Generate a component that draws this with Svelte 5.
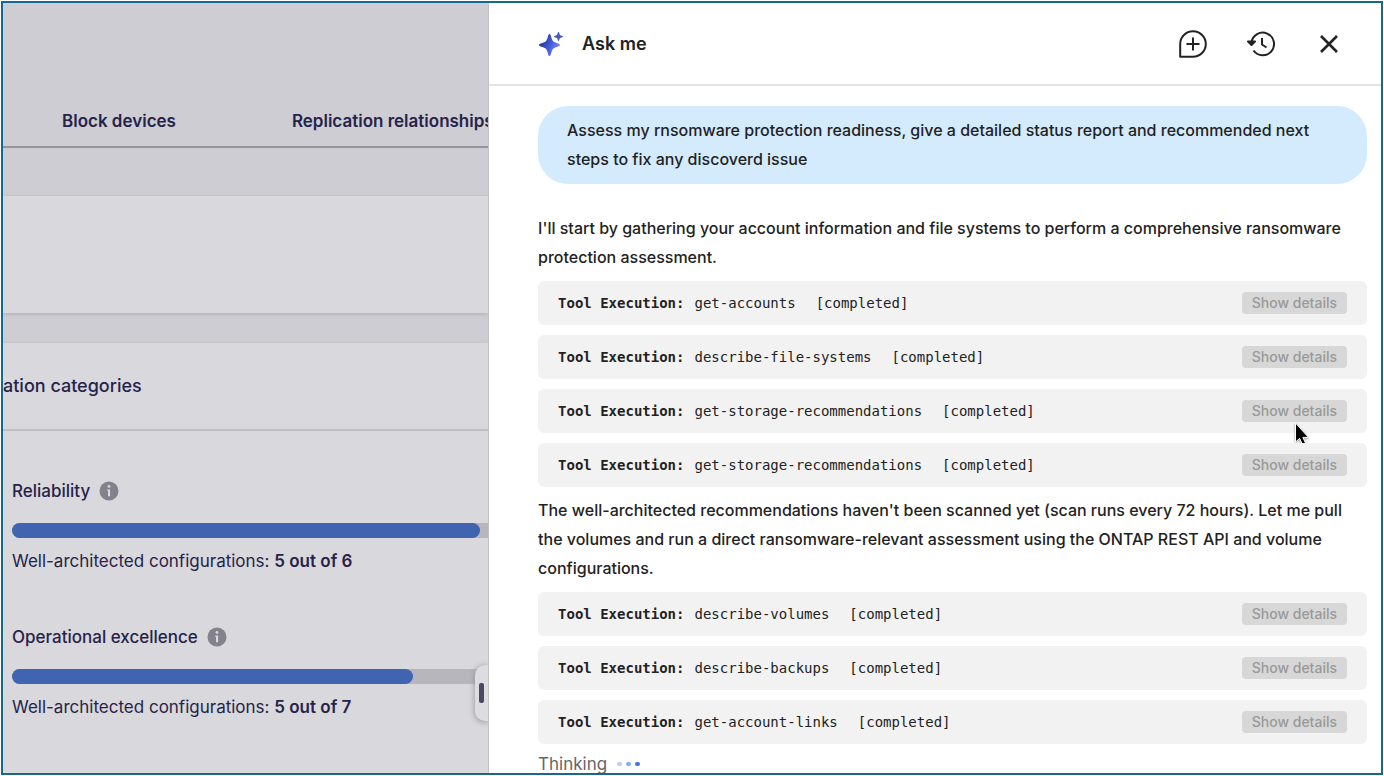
<script lang="ts">
  interface Category {
    name: string;
    done: number;
    total: number;
  }

  interface Block {
    text: string;
    tools: string[];
  }

  const tabs = ["Block devices", "Replication relationships"];

  const categories: Category[] = [
    { name: "Reliability", done: 5, total: 6 },
    { name: "Operational excellence", done: 5, total: 7 },
  ];

  const question =
    "Assess my rnsomware protection readiness, give a detailed status report and recommended next steps to fix any discoverd issue";

  const blocks: Block[] = [
    {
      text: "I'll start by gathering your account information and file systems to perform a comprehensive ransomware protection assessment.",
      tools: [
        "get-accounts",
        "describe-file-systems",
        "get-storage-recommendations",
        "get-storage-recommendations",
      ],
    },
    {
      text: "The well-architected recommendations haven't been scanned yet (scan runs every 72 hours). Let me pull the volumes and run a direct ransomware-relevant assessment using the ONTAP REST API and volume configurations.",
      tools: ["describe-volumes", "describe-backups", "get-account-links"],
    },
  ];
</script>

<div class="app">
  <main class="dashboard">
    <nav class="tabs">
      {#each tabs as tab}
        <a href="#{tab}">{tab}</a>
      {/each}
    </nav>

    <section class="card summary"></section>

    <section class="card">
      <h2>ation categories</h2>
      {#each categories as category (category.name)}
        <div class="category">
          <h3>
            {category.name}
            <svg width="20" height="20" viewBox="0 0 20 20" aria-hidden="true">
              <circle cx="10" cy="10" r="9.5" fill="#83818c" />
              <circle cx="10" cy="5.4" r="1.4" fill="#d9d8dd" />
              <path d="M8.2 8.4h2.9v6.8H9V9.8h-.8z" fill="#d9d8dd" />
            </svg>
          </h3>
          <div class="track">
            <div class="fill" style="width: {(category.done / category.total) * 100}%"></div>
          </div>
          <p>
            Well-architected configurations: <b>{category.done} out of {category.total}</b>
          </p>
        </div>
      {/each}
    </section>

    <button class="handle" aria-label="Resize panel"><span></span></button>
  </main>

  <aside class="panel">
    <header>
      <svg class="logo" width="26" height="26" viewBox="0 0 26 26" aria-hidden="true">
        <defs>
          <linearGradient id="spark" x1="0" y1="0.2" x2="1" y2="0.7">
            <stop offset="0.1" stop-color="#26339c" />
            <stop offset="0.6" stop-color="#4662e0" />
            <stop offset="1" stop-color="#a58be8" />
          </linearGradient>
        </defs>
        <path
          d="M11.5 3c1 0 1.300 1.500 2 4 .9 3 1.800 3.800 4.500 4.700 2.300.7 4 1.100 4 2.300s-1.700 1.500-4 2.300c-2.700.9-3.600 1.700-4.500 4.700-.7 2.500-1 4-2 4s-1.300-1.500-2-4c-.9-3-1.800-3.800-4.500-4.700C2.700 15.500 1 15.200 1 14s1.700-1.600 4-2.300c2.700-.9 3.600-1.700 4.500-4.700.7-2.500 1-4 2-4z"
          fill="url(#spark)"
        />
        <path
          d="M20.500 1c.8 0 .9 2.300 1.500 2.900.6.700 3 .7 3 1.600s-2.400 1-3 1.600c-.6.700-.7 2.900-1.500 2.900s-.9-2.200-1.500-2.900c-.6-.6-3-.7-3-1.600s2.400-.9 3-1.600c.6-.6.7-2.900 1.500-2.900z"
          fill="#4258c4"
        />
      </svg>
      <h1>Ask me</h1>
      <div class="actions">
        <button aria-label="New chat">
          <svg width="28" height="28" viewBox="0 0 28 28">
            <path d="M1.200 26.800V14A12.800 12.800 0 1 1 14 26.800z" />
            <path d="M14 7.500v13M7.500 14h13" />
          </svg>
        </button>
        <button aria-label="History">
          <svg width="28" height="28" viewBox="0 0 28 28">
            <path d="M4.500 12.500A11.300 11.300 0 1 1 6.500 20.500" />
            <path d="M15 8v6.500l4.500 3" />
            <path d="M1 11.500h7l-3.500 3.500z" fill="#222" />
          </svg>
        </button>
        <button aria-label="Close">
          <svg width="28" height="28" viewBox="0 0 28 28">
            <path d="M6 6l16 16M22 6L6 22" stroke-width="2.600" />
          </svg>
        </button>
      </div>
    </header>

    <div class="chat">
      <p class="question">{question}</p>

      {#each blocks as block, b}
        <p class="answer">{block.text}</p>
        <ul>
          {#each block.tools as tool, i}
            <li>
              <code>
                <b>Tool Execution:</b>
                <span class="tool">{tool}</span>
                <span>[completed]</span>
              </code>
              <button class="details">Show details</button>
              {#if b === 0 && i === 2}
                <svg class="cursor" width="16" height="26" viewBox="0 0 16 26" aria-hidden="true">
                  <path
                    d="M1.500 1v19l4.200-3.600 3.200 7.400 3.200-1.400-3.200-7h5.600z"
                    fill="#000"
                    stroke="#fff"
                  />
                </svg>
              {/if}
            </li>
          {/each}
        </ul>
      {/each}

      <div class="thinking">
        Thinking
        <span class="dots"><i></i><i></i><i></i></span>
      </div>
    </div>
  </aside>
</div>

<style>
  :global(body) {
    margin: 0;
    background: #fff;
  }

  .app {
    display: grid;
    grid-template-columns: 35.2% 1fr;
    box-sizing: border-box;
    height: calc(100vh - 2px);
    margin: 1px;
    border: 2px solid #17698c;
    overflow: hidden;
    font-family: Inter, "Liberation Sans", sans-serif;
    font-size: 17px;
    color: #222;
  }

  h1,
  h2,
  h3,
  p,
  ul {
    margin: 0;
    padding: 0;
    font-size: inherit;
  }

  button {
    padding: 0;
    border: 0;
    background: none;
    font-family: inherit;
    cursor: pointer;
  }

  /* Dimmed dashboard behind the panel */
  .dashboard {
    position: relative;
    min-width: 0;
    overflow: hidden;
    background: #cecdd3;
    color: #26234a;
  }

  .tabs {
    display: flex;
    gap: 116px;
    padding: 104px 0 11px 59px;
    border-bottom: 2px solid #96949d;
    margin-bottom: 48px;
    line-height: 28px;
    white-space: nowrap;
  }

  .tabs a {
    color: inherit;
    font-weight: 600;
    text-decoration: none;
  }

  .card {
    background: #d9d8dd;
    box-shadow: 0 1px 4px #aeadb6;
  }

  .summary {
    height: 117px;
    margin-bottom: 30px;
  }

  .card:not(.summary) {
    height: 100%;
  }

  h2 {
    padding: 29px 0;
    border-bottom: 2px solid #c0bfc6;
    font-size: 18px;
    font-weight: 500;
    line-height: 28px;
  }

  .category {
    padding: 46px 0 12px 9px;
  }

  .category + .category {
    padding-top: 36px;
  }

  h3 {
    display: flex;
    align-items: center;
    gap: 9px;
    font-weight: 500;
    line-height: 28px;
  }

  /* Runs on under the panel */
  .track {
    width: 118%;
    height: 15px;
    margin: 18px 0 9px;
    border-radius: 8px;
    background: #b7b6bd;
  }

  .fill {
    height: 100%;
    border-radius: 8px;
    background: #4064b0;
  }

  .category p {
    line-height: 28px;
    white-space: nowrap;
  }

  .category b {
    font-weight: 600;
  }

  .handle {
    position: absolute;
    right: 0;
    bottom: 54px;
    display: flex;
    align-items: center;
    width: 13px;
    height: 56px;
    padding-left: 4px;
    border-radius: 10px 0 0 10px;
    background: #dddce1;
    box-shadow: 0 1px 6px #8f8e99;
  }

  .handle span {
    width: 5px;
    height: 20px;
    border-radius: 2px;
    background: #4b4962;
  }

  .panel {
    min-width: 0;
    border-left: 1px solid #c2c1c8;
    background: #fff;
  }

  header {
    display: flex;
    align-items: center;
    height: 81px;
    padding: 0 38px 0 49px;
    border-bottom: 2px solid #e4e4e4;
  }

  h1 {
    margin-left: 18px;
    font-size: 18px;
    font-weight: 600;
  }

  .actions {
    display: flex;
    gap: 40px;
    margin-left: auto;
  }

  .actions button {
    display: flex;
  }

  .actions svg {
    fill: none;
    stroke: #222;
    stroke-width: 2;
    stroke-linejoin: round;
  }

  .chat {
    padding: 20px 14px 0 49px;
    line-height: 29px;
  }

  .question,
  .answer {
    font-size: 16px;
    font-weight: 500;
  }

  .question {
    padding: 10px 29px;
    margin-bottom: 30px;
    border-radius: 30px;
    background: #d4ebfe;
  }

  ul {
    display: flex;
    flex-direction: column;
    gap: 10px;
    margin: 9px 0;
    list-style: none;
  }

  li {
    position: relative;
    display: flex;
    align-items: center;
    justify-content: space-between;
    height: 44px;
    padding: 0 20px;
    border-radius: 6px;
    background: #f2f2f2;
  }

  code {
    display: flex;
    gap: 10px;
    font-family: "DejaVu Sans Mono", monospace;
    font-size: 14px;
  }

  .tool {
    margin-right: 10px;
  }

  .details {
    padding: 0 10px;
    border-radius: 4px;
    background: #d7d7d7;
    color: #999;
    font-size: 14px;
    font-weight: 500;
    line-height: 22px;
  }

  .cursor {
    position: absolute;
    right: 57px;
    top: 33px;
    filter: drop-shadow(0 1px 1px #0006);
  }

  .thinking {
    display: flex;
    align-items: center;
    gap: 10px;
    line-height: 22px;
    color: #666;
  }

  .dots {
    display: flex;
    gap: 4px;
  }

  .dots i {
    width: 5px;
    height: 4px;
    border-radius: 2px;
    background: #b9cff8;
  }

  .dots i:nth-child(2) {
    background: #86abf2;
  }

  .dots i:nth-child(3) {
    background: #3b78ea;
  }
</style>
